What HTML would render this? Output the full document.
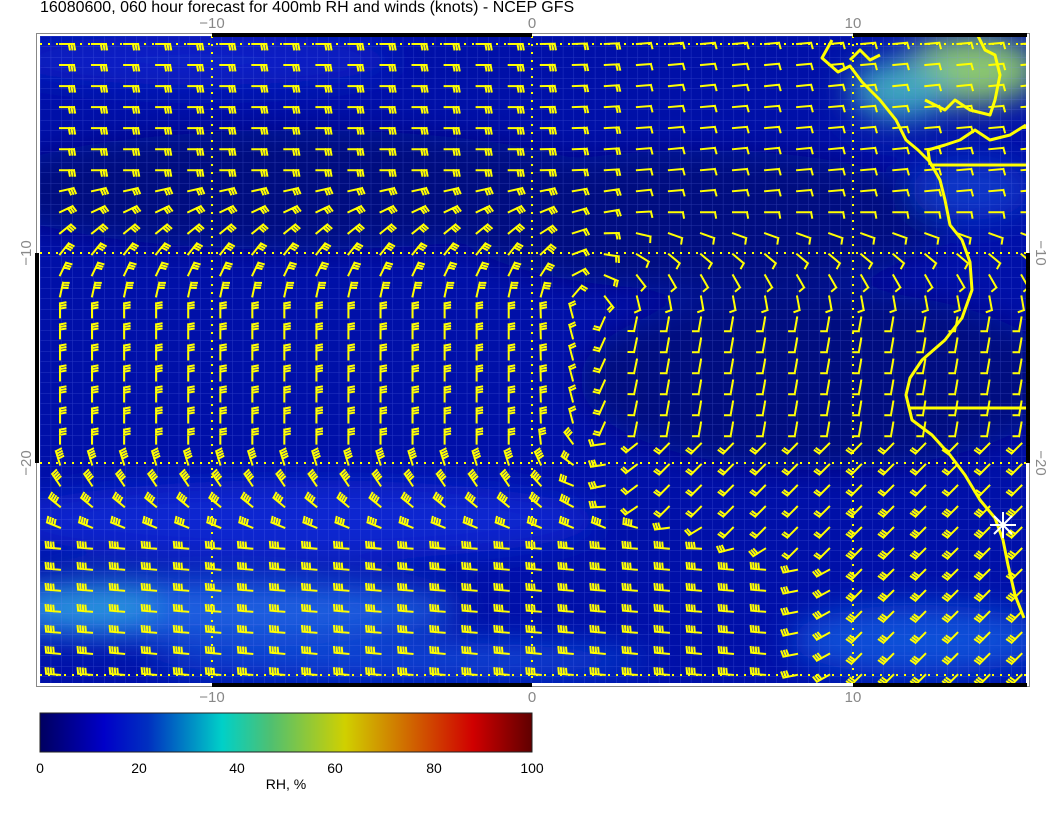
<!DOCTYPE html>
<html><head><meta charset="utf-8"><style>
html,body{margin:0;padding:0;background:#fff;width:1056px;height:816px;overflow:hidden;font-family:"Liberation Sans",sans-serif}
</style></head><body>
<svg id="s" width="1056" height="816" xmlns="http://www.w3.org/2000/svg" style="position:absolute;left:0;top:0">
<defs>
<filter id="b" x="-50%" y="-50%" width="200%" height="200%"><feGaussianBlur stdDeviation="16"/></filter>
<clipPath id="c"><rect x="40" y="36" width="986" height="647"/></clipPath>
<pattern id="g" width="10.67" height="10.5" patternUnits="userSpaceOnUse" x="40" y="36"><path d="M0 0V10.5M0 0H10.67" stroke="#8090ff" stroke-opacity="0.3" stroke-width="1" fill="none"/></pattern>
<linearGradient id="cb" x1="0" x2="1"><stop offset="0" stop-color="#000060"/><stop offset="0.13" stop-color="#0000c8"/><stop offset="0.22" stop-color="#0030c0"/><stop offset="0.37" stop-color="#00d0c8"/><stop offset="0.47" stop-color="#50c070"/><stop offset="0.62" stop-color="#d0d000"/><stop offset="0.72" stop-color="#d08000"/><stop offset="0.88" stop-color="#d00000"/><stop offset="1" stop-color="#600000"/></linearGradient>
</defs>
<text x="40" y="12" font-size="16" fill="#000">16080600, 060 hour forecast for 400mb RH and winds (knots) - NCEP GFS</text>
<rect x="36.5" y="33.5" width="993" height="653" fill="none" stroke="#888" stroke-width="1"/>
<g clip-path="url(#c)">
<rect x="40" y="36" width="986" height="647" fill="#0010a8"/>
<g filter="url(#b)">
<ellipse cx="300" cy="190" rx="320" ry="60" fill="#000a80"/>
<ellipse cx="700" cy="220" rx="250" ry="70" fill="#000a80"/>
<ellipse cx="820" cy="380" rx="240" ry="90" fill="#000a80"/>
<ellipse cx="200" cy="60" rx="200" ry="25" fill="#0820c8"/>
<ellipse cx="300" cy="520" rx="300" ry="40" fill="#0828d0"/>
<ellipse cx="200" cy="610" rx="260" ry="30" fill="#1a60e0"/>
<ellipse cx="90" cy="605" rx="70" ry="22" fill="#2c98e0"/>
<ellipse cx="400" cy="660" rx="250" ry="18" fill="#0c48d8"/>
<ellipse cx="920" cy="640" rx="130" ry="35" fill="#0c50d8"/>
<ellipse cx="970" cy="70" rx="70" ry="35" fill="#8cc870"/>
<ellipse cx="900" cy="90" rx="50" ry="30" fill="#40a8c0"/>
<ellipse cx="970" cy="190" rx="60" ry="30" fill="#0838c8"/>
</g>
<rect x="40" y="36" width="986" height="647" fill="url(#g)"/>
<g stroke="#ffff00" stroke-width="2" stroke-dasharray="2 6" fill="none">
<path d="M40 44H1026M40 253H1026M40 463H1026M40 675H1026M212 36V683M532 36V683M853 36V683"/>
</g>
<g id="barbs" stroke="#ffff00" stroke-width="2" fill="none" stroke-linecap="square"></g>
<g stroke="#ffff00" stroke-width="3" fill="none" stroke-linejoin="round">
<path d="M832 40L822 58L838 72L850 66L862 82L880 100L896 120L906 140L918 150L930 162L940 180L945 200L950 225L962 240L970 262L972 290L962 318L945 340L922 360L910 378L906 395L912 420L932 435L950 455L965 475L980 500L995 518L1003 540L1008 565L1015 595L1024 618"/>
<path d="M930 165H1026M910 408H1026"/>
<path d="M930 165L928 150L945 145L960 140L975 130L990 140L1010 135L1026 125"/>
<path d="M978 36L985 50L995 55L1000 75L995 100L990 115L970 110L955 100L945 110L925 100"/>
<path d="M850 60L860 50L870 60L880 55"/>
</g>
</g>
<g stroke="#fff" stroke-width="2"><path d="M990 525H1016M1003 512V538M994 516L1012 534M1012 516L994 534"/></g>
<g fill="#000"><rect x="212" y="33" width="320" height="4"/><rect x="853" y="33" width="174" height="4"/><rect x="212" y="683" width="320" height="4"/><rect x="853" y="683" width="174" height="4"/><rect x="35" y="253" width="4" height="210"/><rect x="1026" y="253" width="4" height="210"/></g>
<g fill="#888" font-size="15" text-anchor="middle">
<text x="212" y="28">−10</text><text x="532" y="28">0</text><text x="853" y="28">10</text>
<text x="212" y="702">−10</text><text x="532" y="702">0</text><text x="853" y="702">10</text>
<text transform="translate(31,253) rotate(-90)">−10</text><text transform="translate(31,463) rotate(-90)">−20</text>
<text transform="translate(1036,253) rotate(90)">−10</text><text transform="translate(1036,463) rotate(90)">−20</text>
</g>
<rect x="40" y="713" width="492" height="39" fill="url(#cb)" stroke="#222" stroke-width="1"/>
<g font-size="14" fill="#000" text-anchor="middle">
<text x="40" y="773">0</text><text x="139" y="773">20</text><text x="237" y="773">40</text><text x="335" y="773">60</text><text x="434" y="773">80</text><text x="532" y="773">100</text>
<text x="286" y="789">RH, %</text>
</g>
</svg>
<script>
(function(){
var g=document.getElementById('barbs'),out='';
function cl(v){return v<0?0:v>1?1:v;}
var D=Math.PI/180;
for(var r=0;r<31;r++){
 var y=44+r*21.03,lat=-(y-44)/21.03;
 for(var c=0;c<31;c++){
  var lon=-15+c,x=54+c*32.05+6;
  if(x>1022)continue;
  var phW;
  if(lat>-6)phW=0; else if(lat>-13)phW=-90*cl((-lat-6)/7); else if(lat>-19)phW=-90; else phW=-90-85*cl((-lat-19)/5);
  var phE;
  if(lat>-8)phE=-5; else if(lat>-19)phE=100*cl((-lat-8)/5); else phE=135;
  var w;
  if(lat>-22) w=cl((lon+0.5)/4);
  else { var th=0.5+cl((-lat-22)/3)*6.5; w=cl((lon-th)/3); }
  var vx=(1-w)*Math.cos(phW*D)+w*Math.cos(phE*D), vy=(1-w)*Math.sin(phW*D)+w*Math.sin(phE*D);
  var ml=Math.sqrt(vx*vx+vy*vy)||1;
  var nW=lat>-20?3:4, nE=lat>-19?1:2;
  if(lon>9&&lat<-21)nE=3;
  var n=Math.round((1-w)*nW+w*nE); if(n<1)n=1;
  var dx=vx/ml,dy=vy/ml,fx=-dy,fy=dx;
  var L=14,ex=x+dx*L,ey=y+dy*L;
  out+='M'+x.toFixed(1)+' '+y.toFixed(1)+'L'+ex.toFixed(1)+' '+ey.toFixed(1);
  for(var k=0;k<n;k++){var bx=ex-dx*k*2.6,by=ey-dy*k*2.6;
   out+='M'+bx.toFixed(1)+' '+by.toFixed(1)+'l'+(fx*5.5+dx*1).toFixed(1)+' '+(fy*5.5+dy*1).toFixed(1);}
 }
}
g.innerHTML='<path d="'+out+'"/>';
})();
</script>
</body></html>
